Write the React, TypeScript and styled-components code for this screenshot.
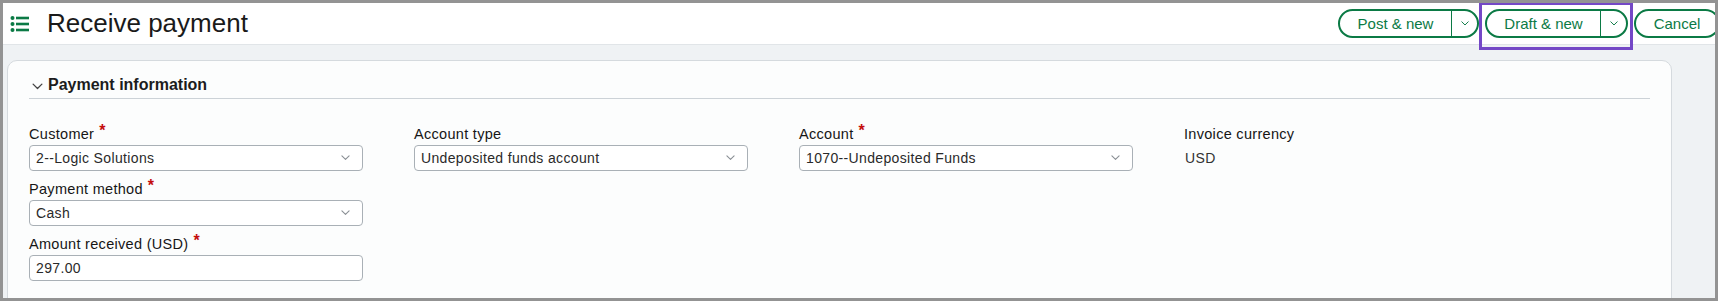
import styled, { createGlobalStyle } from "styled-components";

const GlobalStyle = createGlobalStyle`
  html, body {
    margin: 0;
    padding: 0;
    background: #ffffff;
  }
  * {
    box-sizing: border-box;
  }
`;

const green = "#0b7a45";

const Page = styled.div`
  position: relative;
  width: 1718px;
  height: 301px;
  border: 3px solid #939393;
  background: #eff2f4;
  overflow: hidden;
  font-family: "Liberation Sans", Arial, sans-serif;
  color: #1f1f1f;
`;

const Header = styled.header`
  height: 42px;
  display: flex;
  align-items: center;
  padding-left: 6px;
  background: #ffffff;
  border-bottom: 1px solid #e1e5e8;
`;

const MenuIcon = styled.svg`
  width: 21px;
  height: 18px;
  flex-shrink: 0;
`;

const Title = styled.h1`
  margin: 0 0 0 17px;
  font-size: 26px;
  font-weight: 400;
  color: #1a1a1a;
`;

const Actions = styled.div`
  margin-left: auto;
  display: flex;
  align-items: center;
  gap: 6px;
  margin-right: -5px;
`;

const Pill = styled.div<{ $width: number }>`
  display: flex;
  align-items: stretch;
  width: ${(p) => p.$width}px;
  height: 29px;
  border: 2px solid ${green};
  border-radius: 15px;
  color: ${green};
  font-size: 15px;
  background: #ffffff;
`;

const PillLabel = styled.span`
  flex: 1;
  display: flex;
  align-items: center;
  justify-content: center;
`;

const PillCaret = styled.span`
  width: 26px;
  display: flex;
  align-items: center;
  justify-content: center;
  border-left: 1.5px solid ${green};
`;

const Highlight = styled.div`
  position: absolute;
  left: 1476px;
  top: -1px;
  width: 154px;
  height: 48px;
  border: 3px solid #7448c6;
  pointer-events: none;
`;

const Body = styled.main`
  padding: 15px 43px 0 4px;
`;

const Card = styled.section`
  height: 260px;
  background: #fcfdfd;
  border: 1px solid #d5dade;
  border-radius: 10px;
  padding: 14px 21px 0 21px;
`;

const SectionHead = styled.div`
  display: flex;
  align-items: center;
  gap: 5px;
  height: 24px;
  padding-left: 3px;
  border-bottom: 1px solid #ccd2d7;
`;

const SectionTitle = styled.h2`
  margin: 0;
  font-size: 16px;
  font-weight: 700;
  color: #1c1c1c;
  position: relative;
  top: -2px;
`;

const Grid = styled.div`
  display: grid;
  grid-template-columns: repeat(4, 334px);
  column-gap: 51px;
  padding-top: 26px;
`;

const Column = styled.div`
  display: flex;
  flex-direction: column;
  gap: 9px;
`;

const Field = styled.div`
  display: flex;
  flex-direction: column;
  gap: 2px;
`;

const Label = styled.label`
  height: 18px;
  line-height: 18px;
  font-size: 14.5px;
  letter-spacing: 0.3px;
  color: #161616;
`;

const Required = styled.span`
  color: #c40d0d;
  font-size: 16px;
  font-weight: 700;
  margin-left: 5px;
  position: relative;
  top: -3px;
`;

const Box = styled.div`
  height: 26px;
  display: flex;
  align-items: center;
  padding: 0 12px 0 6px;
  border: 1px solid #a9b0b6;
  border-radius: 4px;
  background: #ffffff;
  font-size: 14px;
  letter-spacing: 0.35px;
  color: #2a2a2a;
`;

const BoxValue = styled.span`
  flex: 1;
`;

const StaticValue = styled.div`
  height: 26px;
  display: flex;
  align-items: center;
  padding-left: 1px;
  font-size: 14px;
  letter-spacing: 0.35px;
  color: #333333;
`;

const Chevron = ({ color = "#8a8f94", size = 9 }: { color?: string; size?: number }) => (
  <svg width={size} height={size * 0.6} viewBox="0 0 10 6" fill="none">
    <path d="M1 1l4 4 4-4" stroke={color} strokeWidth="1.2" strokeLinecap="round" strokeLinejoin="round" />
  </svg>
);

interface FieldProps {
  label: string;
  required?: boolean;
  value: string;
  select?: boolean;
}

function FormField({ label, required, value, select }: FieldProps) {
  return (
    <Field>
      <Label>
        {label}
        {required && <Required>*</Required>}
      </Label>
      <Box>
        <BoxValue>{value}</BoxValue>
        {select && <Chevron />}
      </Box>
    </Field>
  );
}

export default function App() {
  return (
    <>
      <GlobalStyle />
      <Page>
        <Header>
          <MenuIcon viewBox="0 0 21 18">
            <circle cx="3.5" cy="3" r="2" fill={green} />
            <circle cx="3.5" cy="9" r="2" fill={green} />
            <circle cx="3.5" cy="15" r="2" fill={green} />
            <rect x="7" y="1.7" width="13" height="2.6" fill={green} />
            <rect x="7" y="7.7" width="13" height="2.6" fill={green} />
            <rect x="7" y="13.7" width="13" height="2.6" fill={green} />
          </MenuIcon>
          <Title>Receive payment</Title>
          <Actions>
            <Pill $width={141}>
              <PillLabel>Post &amp; new</PillLabel>
              <PillCaret>
                <Chevron color={green} size={8} />
              </PillCaret>
            </Pill>
            <Pill $width={143}>
              <PillLabel>Draft &amp; new</PillLabel>
              <PillCaret>
                <Chevron color={green} size={8} />
              </PillCaret>
            </Pill>
            <Pill $width={86}>
              <PillLabel>Cancel</PillLabel>
            </Pill>
          </Actions>
        </Header>
        <Highlight />
        <Body>
          <Card>
            <SectionHead>
              <Chevron color="#444" size={11} />
              <SectionTitle>Payment information</SectionTitle>
            </SectionHead>
            <Grid>
              <Column>
                <FormField label="Customer" required value="2--Logic Solutions" select />
                <FormField label="Payment method" required value="Cash" select />
                <FormField label="Amount received (USD)" required value="297.00" />
              </Column>
              <Column>
                <FormField label="Account type" value="Undeposited funds account" select />
              </Column>
              <Column>
                <FormField label="Account" required value="1070--Undeposited Funds" select />
              </Column>
              <Column>
                <Field>
                  <Label>Invoice currency</Label>
                  <StaticValue>USD</StaticValue>
                </Field>
              </Column>
            </Grid>
          </Card>
        </Body>
      </Page>
    </>
  );
}
